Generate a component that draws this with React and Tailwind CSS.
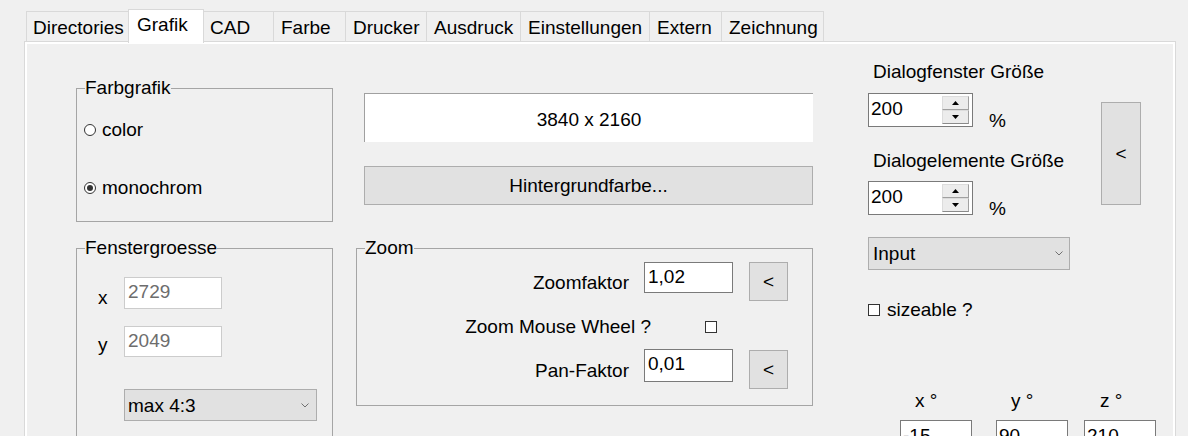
import React from "react";

const tabs = [
  { label: "Directories", cls: "w-[102px] pl-[6px] border-l" },
  { label: "Grafik", cls: "w-[76px] pl-[8px] border-l border-r", active: true },
  { label: "CAD", cls: "w-[69px] pl-[6px]" },
  { label: "Farbe", cls: "w-[72px] pl-[7px] border-l" },
  { label: "Drucker", cls: "w-[81px] pl-[7px] border-l" },
  { label: "Ausdruck", cls: "w-[94px] pl-[7px] border-l" },
  { label: "Einstellungen", cls: "w-[129px] pl-[7px] border-l" },
  { label: "Extern", cls: "w-[72px] pl-[7px] border-l" },
  { label: "Zeichnung", cls: "w-[103px] pl-[7px] border-l border-r" },
];

const Chevron = () => (
  <svg width="8" height="5" viewBox="0 0 8 5" className="shrink-0">
    <polyline points="0.5,0.5 4,4 7.5,0.5" fill="none" stroke="#707070" strokeWidth="1" />
  </svg>
);

const Radio = ({ checked }) => (
  <span className="mt-[4px] w-[12px] h-[12px] rounded-full border border-[#333333] bg-white flex items-center justify-center shrink-0">
    {checked && <span className="w-[6px] h-[6px] rounded-full bg-[#333333]" />}
  </span>
);

const Checkbox = () => (
  <span className="block w-[12px] h-[12px] border border-[#333333] bg-white shrink-0" />
);

const Spinner = ({ value }) => (
  <div className="w-[105px] h-[34px] border border-[#7a7a7a] bg-white flex">
    <div className="flex-1 pl-[2px] pt-[5px]">{value}</div>
    <div className="w-[27px] mr-[3px] mt-[2px] flex flex-col">
      <div className="h-[14px] bg-[#ececec] border border-[#dcdcdc] border-b-[#a0a0a0] border-r-[#a0a0a0] flex items-center justify-center">
        <svg width="7" height="4" viewBox="0 0 7 4">
          <polygon points="3.5,0 7,4 0,4" fill="#000" />
        </svg>
      </div>
      <div className="h-[14px] bg-[#ececec] border border-[#dcdcdc] border-b-[#8a8a8a] border-r-[#a0a0a0] flex items-center justify-center">
        <svg width="7" height="4" viewBox="0 0 7 4">
          <polygon points="0,0 7,0 3.5,4" fill="#000" />
        </svg>
      </div>
    </div>
  </div>
);

const Group = ({ title, className, children }) => (
  <fieldset className={"border border-[#a5a5a5] " + className}>
    <legend className="ml-[8px] leading-[18px]">{title}</legend>
    {children}
  </fieldset>
);

export default function App() {
  return (
    <div className="w-[1188px] h-[436px] overflow-hidden bg-[#f0f0f0] text-black text-[19px] leading-[19px] font-['Liberation_Sans',Arial,sans-serif]">
      {/* tab strip */}
      <div className="h-[41px] flex items-end pl-[26px]">
        {tabs.map((t) =>
          t.active ? (
            <div
              key={t.label}
              className={"h-[34px] -mb-[2px] relative z-10 bg-white border-t border-[#d9d9d9] pt-[5px] " + t.cls}
            >
              {t.label}
            </div>
          ) : (
            <div
              key={t.label}
              className={"h-[30px] border-t border-[#d9d9d9] pt-[6px] " + t.cls}
            >
              {t.label}
            </div>
          )
        )}
      </div>

      {/* pane */}
      <div className="ml-[24px] w-[1152px] h-[400px] border border-b-0 border-[#d9d9d9]">
        <div className="h-full border-2 border-b-0 border-white flex pl-[49px]">
          {/* column 1 */}
          <div className="w-[257px] flex flex-col *:shrink-0">
            <Group title="Farbgrafik" className="mt-[35px] h-[143px]">
              <div className="pl-[7px] flex flex-col">
                <div className="mt-[23px] flex items-start gap-[6px]">
                  <Radio />
                  <span>color</span>
                </div>
                <div className="mt-[39px] flex items-start gap-[6px]">
                  <Radio checked />
                  <span>monochrom</span>
                </div>
              </div>
            </Group>

            <Group title="Fenstergroesse" className="mt-[17px] h-[220px]">
              <div className="pl-[21px] flex flex-col">
                <div className="mt-[20px] flex items-start">
                  <span className="w-[26px] mt-[11px]">x</span>
                  <div className="w-[98px] h-[32px] bg-white border border-[#cccccc] text-[#6d6d6d] pl-[3px] pt-[4px]">
                    2729
                  </div>
                </div>
                <div className="mt-[17px] flex items-start">
                  <span className="w-[26px] mt-[9px]">y</span>
                  <div className="w-[98px] h-[31px] bg-white border border-[#cccccc] text-[#6d6d6d] pl-[3px] pt-[4px]">
                    2049
                  </div>
                </div>
                <div className="mt-[32px] ml-[26px] w-[193px] h-[32px] bg-[#e1e1e1] border border-[#adadad] flex items-center justify-between pl-[3px] pr-[7px]">
                  <span>max 4:3</span>
                  <Chevron />
                </div>
              </div>
            </Group>
          </div>

          {/* column 2 */}
          <div className="w-[457px] ml-[23px] flex flex-col *:shrink-0">
            <div className="ml-[8px] mt-[49px] w-[449px] h-[49px] bg-white border-t border-l border-[#a0a0a0] flex items-center justify-center pt-[3px]">
              3840 x 2160
            </div>
            <div className="ml-[8px] mt-[24px] w-[449px] h-[39px] bg-[#e1e1e1] border border-[#adadad] flex items-center justify-center">
              Hintergrundfarbe...
            </div>

            <Group title="Zoom" className="mt-[34px] h-[167px]">
              <div className="pr-[24px] flex flex-col">
                <div className="mt-[5px] flex justify-end items-start">
                  <span className="mt-[11px] mr-[15px]">Zoomfaktor</span>
                  <div className="w-[89px] h-[31px] bg-white border border-[#7a7a7a] pl-[3px] pt-[4px]">1,02</div>
                  <div className="ml-[16px] w-[39px] h-[39px] bg-[#e1e1e1] border border-[#adadad] flex items-center justify-center">
                    &lt;
                  </div>
                </div>
                <div className="mt-[16px] flex justify-end items-center">
                  <span>Zoom Mouse Wheel ?</span>
                  <span className="ml-[54px]">
                    <Checkbox />
                  </span>
                  <span className="w-[71px]" />
                </div>
                <div className="mt-[13px] flex justify-end items-start">
                  <span className="mt-[12px] mr-[15px]">Pan-Faktor</span>
                  <div className="w-[89px] h-[33px] bg-white border border-[#7a7a7a] pl-[3px] pt-[4px]">0,01</div>
                  <div className="ml-[16px] mt-[1px] w-[39px] h-[39px] bg-[#e1e1e1] border border-[#adadad] flex items-center justify-center">
                    &lt;
                  </div>
                </div>
              </div>
            </Group>
          </div>

          {/* column 3 */}
          <div className="ml-[55px] w-[300px] flex flex-col *:shrink-0">
            <div className="flex items-start">
              <div className="w-[233px] flex flex-col">
                <span className="mt-[18px] pl-[5px]">Dialogfenster Größe</span>
                <div className="mt-[12px] flex items-start">
                  <Spinner value="200" />
                  <span className="ml-[16px] mt-[18px]">%</span>
                </div>
                <span className="mt-[21px] pl-[5px]">Dialogelemente Größe</span>
                <div className="mt-[11px] flex items-start">
                  <Spinner value="200" />
                  <span className="ml-[16px] mt-[18px]">%</span>
                </div>
              </div>
              <div className="mt-[58px] w-[40px] h-[103px] bg-[#e1e1e1] border border-[#adadad] flex items-center justify-center">
                &lt;
              </div>
            </div>

            <div className="mt-[19px] w-[202px] h-[33px] bg-[#e1e1e1] border border-[#adadad] flex items-center justify-between pl-[4px] pr-[6px]">
              <span>Input</span>
              <Chevron />
            </div>

            <div className="mt-[30px] flex items-center gap-[7px]">
              <Checkbox />
              <span>sizeable ?</span>
            </div>

            <div className="mt-[72px] ml-[32px] flex">
              <span className="w-[72px] pl-[15px]">x °</span>
              <span className="ml-[24px] w-[72px] pl-[15px]">y °</span>
              <span className="ml-[16px] w-[72px] pl-[16px]">z °</span>
            </div>
            <div className="mt-[10px] ml-[32px] flex">
              <div className="w-[72px] h-[34px] bg-white border border-[#7a7a7a] pl-[2px] pt-[5px]">-15</div>
              <div className="ml-[24px] w-[72px] h-[34px] bg-white border border-[#7a7a7a] pl-[2px] pt-[5px]">90</div>
              <div className="ml-[16px] w-[72px] h-[34px] bg-white border border-[#7a7a7a] pl-[2px] pt-[5px]">210</div>
            </div>
          </div>
        </div>
      </div>
    </div>
  );
}
